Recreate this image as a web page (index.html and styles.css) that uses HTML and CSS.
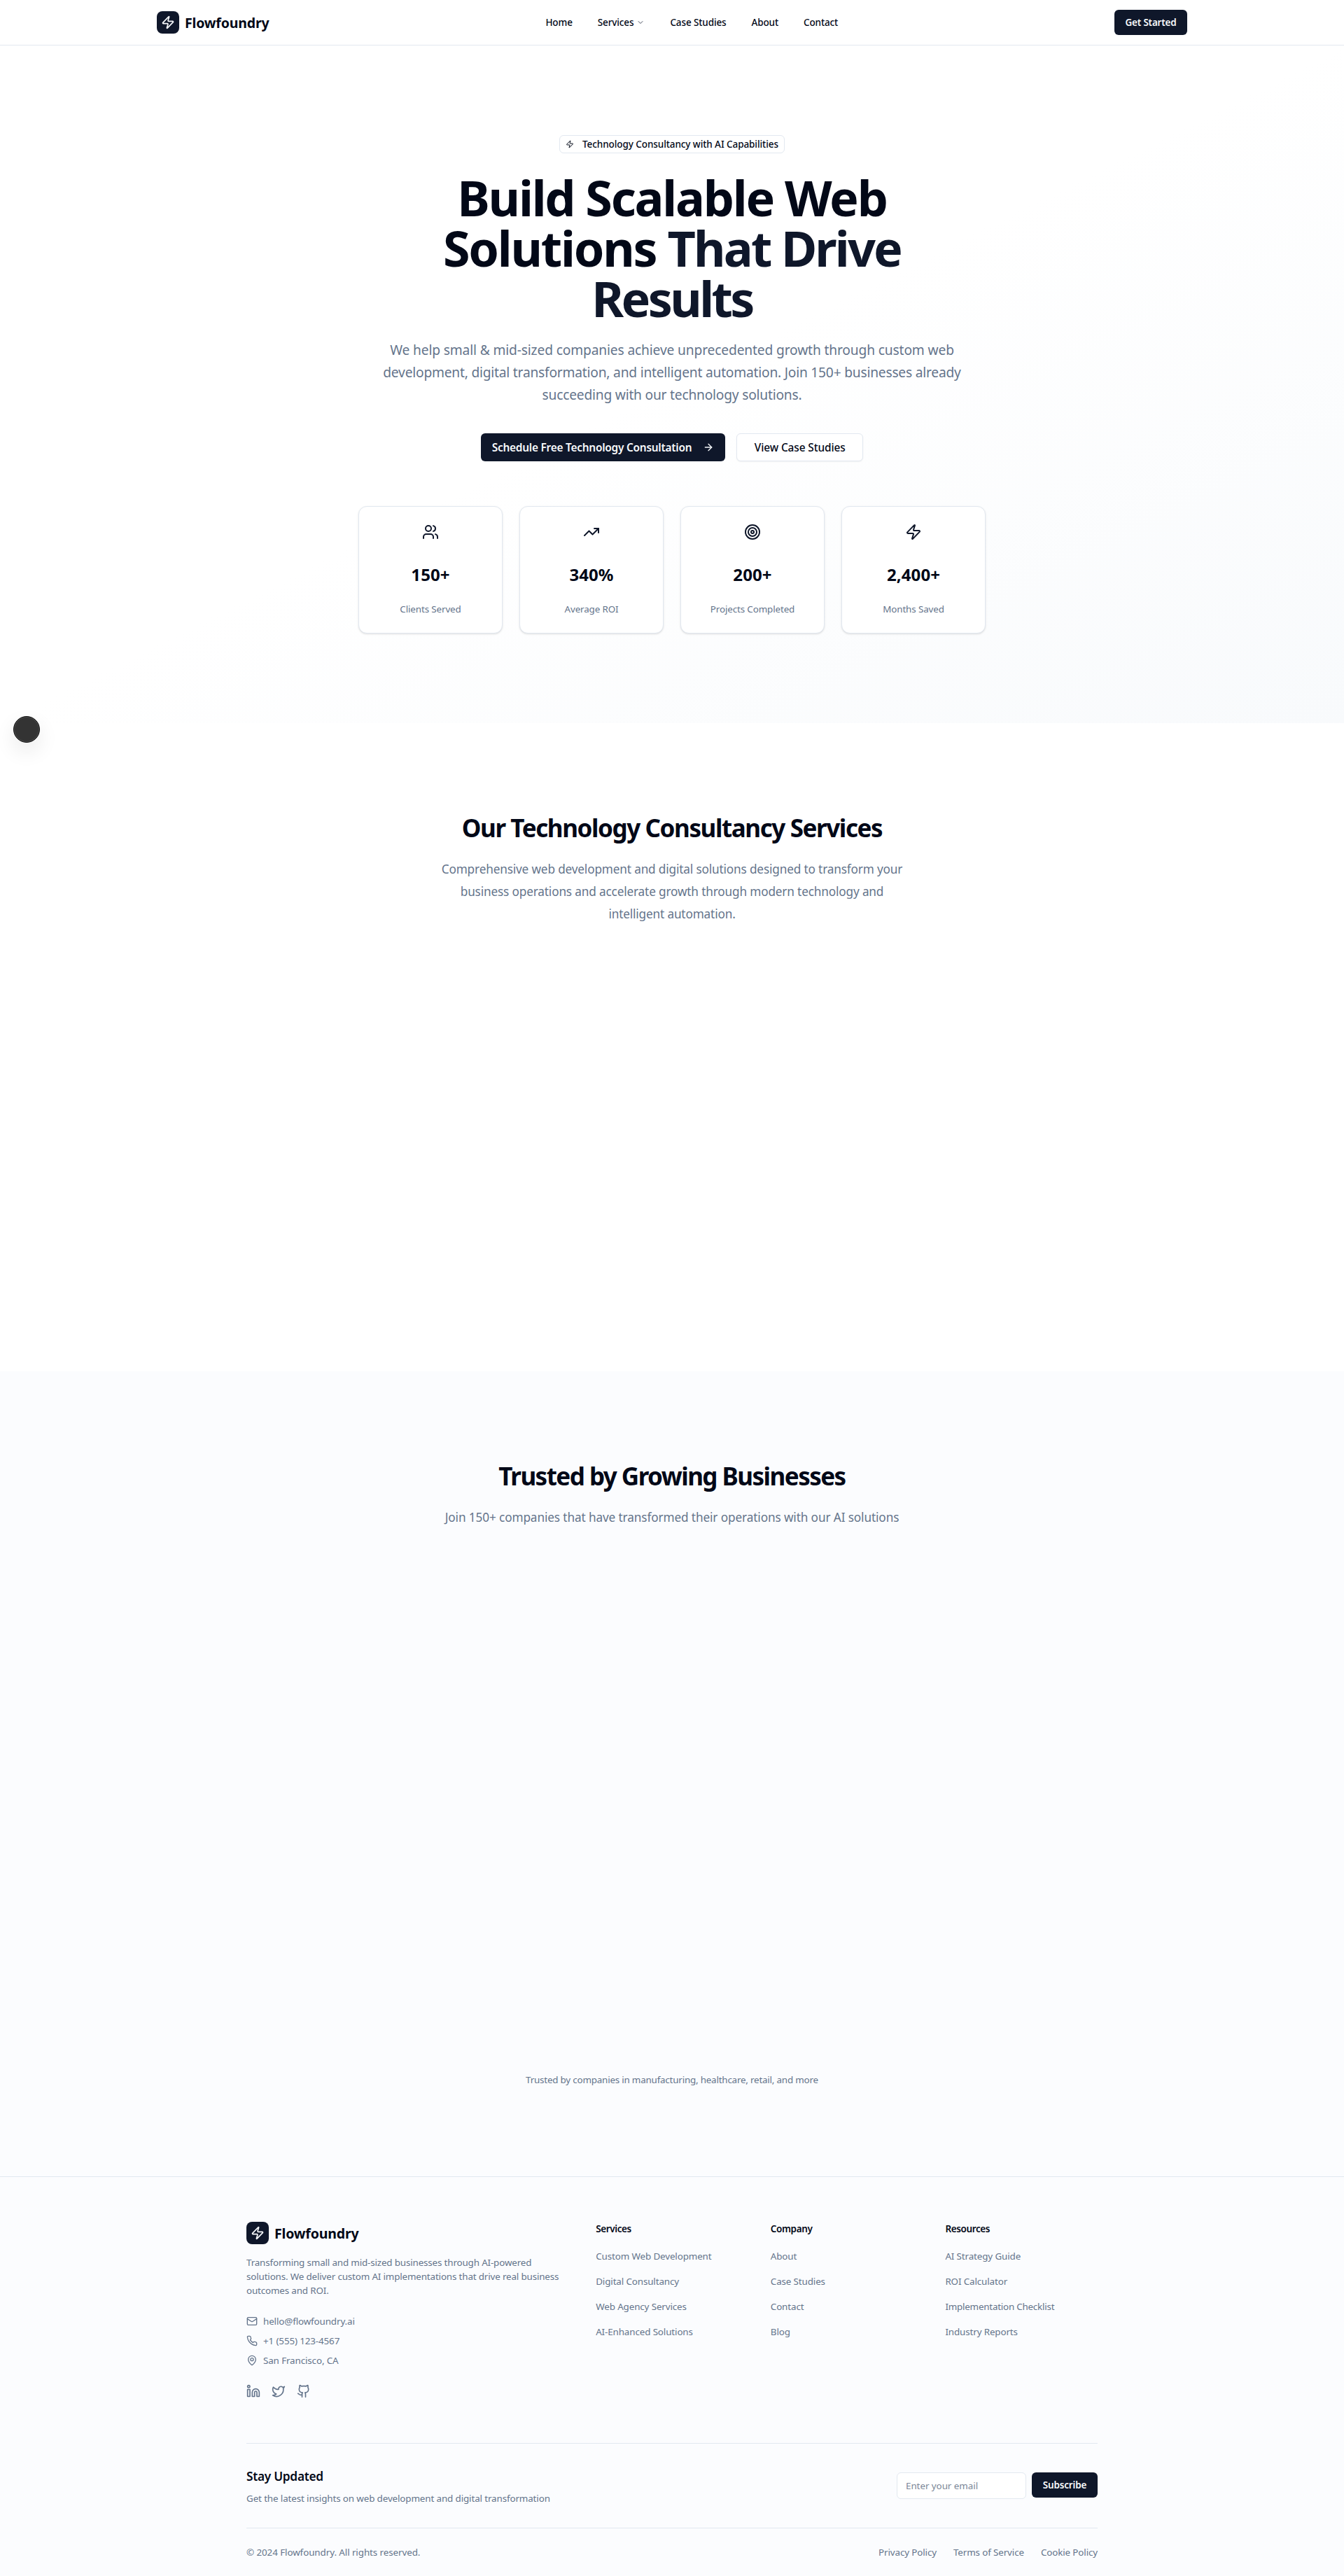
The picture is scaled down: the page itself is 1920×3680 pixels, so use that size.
FILE: index.html
```html
<!DOCTYPE html>
<html lang="en">
<head>
<meta charset="utf-8">
<title>Flowfoundry</title>
<link rel="stylesheet" href="styles.css">
</head>
<body>
<svg class="sprite" aria-hidden="true">
  <symbol id="zap" viewBox="0 0 24 24"><path d="M4 14a1 1 0 0 1-.78-1.63l9.9-10.2a.5.5 0 0 1 .86.46l-1.92 6.02A1 1 0 0 0 13 10h7a1 1 0 0 1 .78 1.63l-9.9 10.2a.5.5 0 0 1-.86-.46l1.92-6.02A1 1 0 0 0 11 14z"/></symbol>
</svg>

<header class="header">
  <div class="header-inner">
    <a class="logo"><span class="logo-mark"><svg class="icon i20"><use href="#zap"/></svg></span><span class="logo-text">Flowfoundry</span></a>
    <nav class="nav">
      <a>Home</a>
      <a class="nav-drop">Services<svg class="icon i12" viewBox="0 0 24 24"><path d="m6 9 6 6 6-6"/></svg></a>
      <a>Case Studies</a>
      <a>About</a>
      <a>Contact</a>
    </nav>
    <a class="btn btn-sm btn-start">Get Started</a>
  </div>
</header>

<main>
  <section class="hero">
    <div class="badge"><svg class="icon i12" viewBox="0 0 24 24"><use href="#zap"/></svg><span>Technology Consultancy with AI Capabilities</span></div>
    <h1>Build Scalable Web<br>Solutions <span class="accent">That Drive</span><br><span class="accent accent-last">Results</span></h1>
    <p class="hero-text"><span class="loose">We help small &amp; mid-sized companies achieve unprecedented growth through custom web</span><br>development, digital transformation, and intelligent automation. Join 150+ businesses already<br>succeeding with our technology solutions.</p>
    <div class="actions">
      <a class="btn btn-lg"><span>Schedule Free Technology Consultation</span><svg class="icon i16" viewBox="0 0 24 24"><path d="M5 12h14"/><path d="m12 5 7 7-7 7"/></svg></a>
      <a class="btn btn-lg btn-outline"><span>View Case Studies</span></a>
    </div>
    <div class="stats">
      <div class="stat">
        <svg class="icon i24" viewBox="0 0 24 24"><path d="M16 21v-2a4 4 0 0 0-4-4H6a4 4 0 0 0-4 4v2"/><circle cx="9" cy="7" r="4"/><path d="M22 21v-2a4 4 0 0 0-3-3.87"/><path d="M16 3.13a4 4 0 0 1 0 7.75"/></svg>
        <div class="stat-value">150+</div><div class="stat-label">Clients Served</div>
      </div>
      <div class="stat">
        <svg class="icon i24" viewBox="0 0 24 24"><path d="m22 7-8.5 8.5-5-5L2 17"/><path d="M16 7h6v6"/></svg>
        <div class="stat-value">340%</div><div class="stat-label">Average ROI</div>
      </div>
      <div class="stat">
        <svg class="icon i24" viewBox="0 0 24 24"><circle cx="12" cy="12" r="10"/><circle cx="12" cy="12" r="6"/><circle cx="12" cy="12" r="2"/></svg>
        <div class="stat-value">200+</div><div class="stat-label">Projects Completed</div>
      </div>
      <div class="stat">
        <svg class="icon i24" viewBox="0 0 24 24"><use href="#zap"/></svg>
        <div class="stat-value">2,400+</div><div class="stat-label">Months Saved</div>
      </div>
    </div>
  </section>

  <section class="services">
    <h2>Our Technology Consultancy Services</h2>
    <p class="lead">Comprehensive web development and digital solutions designed to transform your<br>business operations and accelerate growth through modern technology and<br>intelligent automation.</p>
  </section>

  <section class="trusted">
    <div>
      <h2>Trusted by Growing Businesses</h2>
      <p class="lead lead-wide">Join 150+ companies that have transformed their operations with our AI solutions</p>
    </div>
    <p class="trusted-note">Trusted by companies in manufacturing, healthcare, retail, and more</p>
  </section>
</main>

<footer class="footer">
  <div class="footer-inner">
    <div class="footer-grid">
      <div class="brand">
        <a class="logo"><span class="logo-mark"><svg class="icon i20"><use href="#zap"/></svg></span><span class="logo-text">Flowfoundry</span></a>
        <p class="brand-text">Transforming small and mid-sized businesses through AI-powered<br>solutions. We deliver custom AI implementations that drive real business<br>outcomes and ROI.</p>
        <ul class="contacts">
          <li><svg class="icon i16" viewBox="0 0 24 24"><rect width="20" height="16" x="2" y="4" rx="2"/><path d="m22 7-8.97 5.7a1.94 1.94 0 0 1-2.06 0L2 7"/></svg>hello@flowfoundry.ai</li>
          <li><svg class="icon i16" viewBox="0 0 24 24"><path d="M22 16.92v3a2 2 0 0 1-2.18 2 19.79 19.79 0 0 1-8.63-3.07 19.5 19.5 0 0 1-6-6 19.79 19.79 0 0 1-3.07-8.67A2 2 0 0 1 4.11 2h3a2 2 0 0 1 2 1.72 12.84 12.84 0 0 0 .7 2.81 2 2 0 0 1-.45 2.11L8.09 9.91a16 16 0 0 0 6 6l1.27-1.27a2 2 0 0 1 2.11-.45 12.84 12.84 0 0 0 2.81.7A2 2 0 0 1 22 16.92z"/></svg>+1 (555) 123-4567</li>
          <li><svg class="icon i16" viewBox="0 0 24 24"><path d="M20 10c0 4.993-5.539 10.193-7.399 11.799a1 1 0 0 1-1.202 0C9.539 20.193 4 14.993 4 10a8 8 0 0 1 16 0"/><circle cx="12" cy="10" r="3"/></svg>San Francisco, CA</li>
        </ul>
        <div class="social">
          <svg class="icon i20" viewBox="0 0 24 24"><path d="M16 8a6 6 0 0 1 6 6v7h-4v-7a2 2 0 0 0-2-2 2 2 0 0 0-2 2v7h-4v-7a6 6 0 0 1 6-6z"/><rect width="4" height="12" x="2" y="9"/><circle cx="4" cy="4" r="2"/></svg>
          <svg class="icon i20" viewBox="0 0 24 24"><path d="M22 4s-.7 2.1-2 3.4c1.6 10-9.4 17.3-18 11.6 2.2.1 4.4-.6 6-2C3 15.5.5 9.6 3 5c2.2 2.6 5.6 4.1 9 4-.9-4.2 4-6.6 7-3.8 1.1 0 3-1.2 3-1.2z"/></svg>
          <svg class="icon i20" viewBox="0 0 24 24"><path d="M15 22v-4a4.8 4.8 0 0 0-1-3.5c3 0 6-2 6-5.5.08-1.25-.27-2.48-1-3.5.28-1.15.28-2.35 0-3.5 0 0-1 0-3 1.5-2.64-.5-5.36-.5-8 0C6 2 5 2 5 2c-.3 1.15-.3 2.35 0 3.5A5.403 5.403 0 0 0 4 9c0 3.5 3 5.5 6 5.5-.39.49-.68 1.05-.85 1.65-.17.6-.22 1.23-.15 1.85v4"/><path d="M9 18c-4.51 2-5-2-7-2"/></svg>
        </div>
      </div>
      <div class="links">
        <h3>Services</h3>
        <ul><li>Custom Web Development</li><li>Digital Consultancy</li><li>Web Agency Services</li><li>AI-Enhanced Solutions</li></ul>
      </div>
      <div class="links">
        <h3>Company</h3>
        <ul><li>About</li><li>Case Studies</li><li>Contact</li><li>Blog</li></ul>
      </div>
      <div class="links">
        <h3>Resources</h3>
        <ul><li>AI Strategy Guide</li><li>ROI Calculator</li><li class="tight">Implementation Checklist</li><li>Industry Reports</li></ul>
      </div>
    </div>
    <div class="newsletter">
      <div>
        <h3>Stay Updated</h3>
        <p>Get the latest insights on web development and digital transformation</p>
      </div>
      <form class="signup">
        <input type="email" placeholder="Enter your email">
        <a class="btn btn-sm btn-subscribe">Subscribe</a>
      </form>
    </div>
    <div class="legal">
      <p>© 2024 Flowfoundry. All rights reserved.</p>
      <div class="legal-links"><a>Privacy Policy</a><a>Terms of Service</a><a>Cookie Policy</a></div>
    </div>
  </div>
</footer>
<div class="bubble"></div>
</body>
</html>
```
FILE: styles.css
```css
:root {
  --ink: #020817;
  --primary: #0f172a;
  --muted: #64748b;
  --line: #e2e8f0;
  --tint: #fbfcfe;
}

* { box-sizing: border-box; margin: 0; padding: 0; }

body {
  position: relative;
  width: 1920px;
  background: #fff;
  color: var(--ink);
  font: 13.4px/20px "Noto Sans", "Open Sans", sans-serif;
  letter-spacing: -0.12px;
}

ul { list-style: none; }
.sprite { position: absolute; width: 0; height: 0; }
.icon { flex: none; fill: none; stroke: currentColor; stroke-width: 2; stroke-linecap: round; stroke-linejoin: round; }
.i12 { width: 12px; height: 12px; }
.i16 { width: 16px; height: 16px; }
.i20 { width: 20px; height: 20px; }
.i24 { width: 24px; height: 24px; }
.logo-mark .icon { overflow: visible; }

/* Header */
.header { height: 65px; border-bottom: 1px solid var(--line); }
.header-inner { display: flex; justify-content: space-between; align-items: center; width: 1472px; height: 64px; margin: 0 auto; }
.logo { display: flex; align-items: center; gap: 8px; }
.logo-mark { display: flex; align-items: center; justify-content: center; width: 32px; height: 32px; border-radius: 8px; background: var(--primary); color: #f8fafc; }
.logo-text { padding-top: 2px; font-size: 19.5px; line-height: 28px; font-weight: 700; letter-spacing: -0.16px; }
.nav { display: flex; gap: 36px; font-size: 13.5px; font-weight: 500; letter-spacing: -0.12px; }
.nav-drop { display: flex; align-items: center; gap: 4px; }
.nav-drop .icon { color: #4b5362; }

.btn { display: flex; align-items: center; justify-content: center; border-radius: 6px; background: var(--primary); color: #f8fafc; font-weight: 600; white-space: nowrap; }
.btn-sm { height: 36px; font-size: 13.5px; letter-spacing: -0.2px; }
.btn-start { width: 104px; }
.btn-lg { height: 40px; padding: 0 16px; gap: 16px; font-size: 15.4px; line-height: 24px; letter-spacing: -0.23px; }
.btn-lg span { padding-top: 1px; }
.btn-outline { width: 181px; border: 1px solid var(--line); background: #fff; color: var(--ink); font-weight: 500; letter-spacing: -0.1px; box-shadow: 0 1px 2px rgba(0, 0, 0, .05); }

/* Hero */
.hero {
  display: flex;
  flex-direction: column;
  align-items: center;
  height: 968px;
  padding-top: 128px;
  background: linear-gradient(to bottom right, #fff 0%, #fff 50%, #f8fafc 100%);
  text-align: center;
}
.badge { display: flex; align-items: center; gap: 12px; width: 322px; height: 26px; padding: 0 8px; border: 1px solid var(--line); border-radius: 6px; font-size: 13.5px; font-weight: 500; letter-spacing: -0.08px; white-space: nowrap; }
h1 { height: 216px; margin-top: 24px; padding-top: 3px; font-size: 70px; line-height: 72px; font-weight: 700; letter-spacing: -2.2px; }
h1 .accent { color: var(--primary); letter-spacing: -2.8px; }
h1 .accent-last { letter-spacing: -3.6px; }
.hero-text { margin-top: 25px; color: var(--muted); font-size: 19.2px; line-height: 32px; letter-spacing: -0.21px; }
.hero-text .loose { letter-spacing: -0.14px; }
.actions { display: flex; gap: 16px; margin-top: 39px; }
.stats { display: grid; grid-template-columns: repeat(4, 1fr); gap: 24px; width: 896px; margin-top: 64px; }
.stat { display: flex; flex-direction: column; align-items: center; height: 182px; padding-top: 24px; border: 1px solid var(--line); border-radius: 12px; background: #fff; box-shadow: 0 1px 3px rgba(0, 0, 0, .1), 0 1px 2px -1px rgba(0, 0, 0, .1); }
.stat .icon { color: var(--primary); }
.stat-value { margin-top: 33px; font-size: 24px; line-height: 32px; font-weight: 700; letter-spacing: 0.1px; }
.stat-label { margin-top: 23px; color: var(--muted); }

/* Sections */
h2 { padding-top: 2px; font-size: 35px; line-height: 40px; font-weight: 700; letter-spacing: -1.4px; }
.lead { margin-top: 23px; color: var(--muted); font-size: 17.2px; line-height: 32px; letter-spacing: -0.15px; }
.lead-wide { letter-spacing: -0.11px; }
.services { height: 926px; padding-top: 128px; text-align: center; }
.trusted { display: flex; flex-direction: column; justify-content: space-between; height: 1150px; padding: 128px 0; background: var(--tint); text-align: center; }
.trusted h2 { letter-spacing: -1.52px; }
.trusted-note { color: var(--muted); letter-spacing: -0.2px; }

/* Footer */
.footer { border-top: 1px solid var(--line); background: var(--tint); }
.footer-inner { width: 1216px; margin: 0 auto; padding: 64px 0 24px; }
.footer-grid { display: grid; grid-template-columns: repeat(5, 1fr); gap: 32px; color: var(--muted); }
.footer-grid .logo { color: var(--ink); }
.brand { grid-column: span 2; }
.brand-text { margin-top: 16px; letter-spacing: -0.15px; }
.contacts { display: flex; flex-direction: column; gap: 8px; margin-top: 24px; }
.contacts li { display: flex; align-items: center; gap: 8px; }
.social { display: flex; gap: 16px; margin-top: 24px; }
.links h3 { color: var(--ink); font-size: 13.5px; line-height: 20px; font-weight: 600; letter-spacing: -0.38px; }
.links ul { display: flex; flex-direction: column; gap: 12px; margin-top: 17px; line-height: 24px; }
.links .tight { letter-spacing: -0.22px; }

.newsletter { display: flex; justify-content: space-between; align-items: center; margin-top: 64px; padding: 32px 0; border-top: 1px solid var(--line); }
.newsletter h3 { padding-top: 1px; font-size: 17.3px; line-height: 28px; font-weight: 600; letter-spacing: -0.28px; }
.newsletter p { margin-top: 7px; color: var(--muted); }
.signup { display: flex; align-items: flex-start; gap: 8px; }
.signup input { width: 185px; height: 38px; padding: 0 12px; border: 1px solid var(--line); border-radius: 6px; background: #fff; font: inherit; letter-spacing: -0.05px; }
.signup input::placeholder { color: #7c8798; }
.btn-subscribe { width: 94px; letter-spacing: -0.16px; }

.legal { display: flex; justify-content: space-between; padding-top: 24px; border-top: 1px solid var(--line); color: var(--muted); letter-spacing: -0.08px; }
.legal-links { display: flex; gap: 24px; letter-spacing: -0.12px; }

/* Floating control pinned over the page edge */
.bubble { position: absolute; left: 19px; top: 1023px; width: 38px; height: 38px; border: 1px solid #111; border-radius: 50%; background: #333; box-shadow: inset 0 0 0 1px #4a4a4a, 0 12px 30px rgba(0, 0, 0, .09); }
```
